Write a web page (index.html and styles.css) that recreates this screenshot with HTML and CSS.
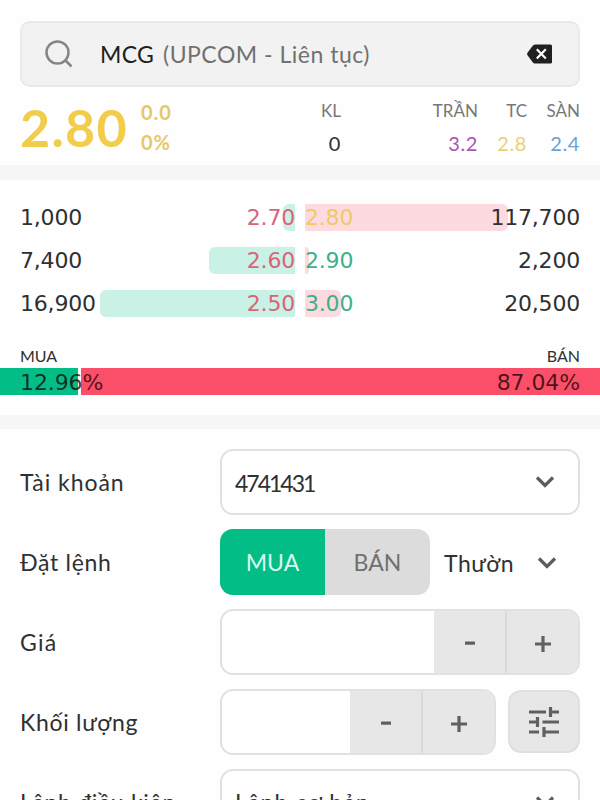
FILE: index.html
```
<!DOCTYPE html>
<html lang="vi">
<head>
  <meta charset="UTF-8">
  <meta name="viewport" content="width=device-width, initial-scale=1.0">
  <title>Đặt lệnh</title>
  <link rel="stylesheet" href="styles.css">
</head>
<body>
  <header class="search">
    <svg class="search-icon" width="28" height="28" viewBox="0 0 28 28">
      <circle cx="12.5" cy="12.5" r="11"/>
      <path d="M20.5 20.5L26.5 26.5"/>
    </svg>
    <span class="symbol">MCG</span>
    <span class="market">(UPCOM - Liên tục)</span>
    <svg class="clear" width="26" height="20" viewBox="0 0 26 20">
      <path d="M8 .5h15.500q1.500 0 1.500 1.500v16q0 1.500-1.500 1.500H8q-1.500 0-2.500-1.500L.5 11.300q-.8-1.300 0-2.600L5.500 2Q6.500.5 8 .5z" fill="#202020"/>
      <path d="M9.800 5.200l9 9.300M18.800 5.200l-9 9.300" stroke="#fff" stroke-width="2.200"/>
    </svg>
  </header>

  <section class="quote">
    <div class="last">2.80</div>
    <div class="change"><span>0.0</span><span>0%</span></div>
    <dl class="volume"><dt>KL</dt><dd>0</dd></dl>
    <dl class="ceil"><dt>TRẦN</dt><dd>3.2</dd></dl>
    <dl class="ref"><dt>TC</dt><dd>2.8</dd></dl>
    <dl class="floor"><dt>SÀN</dt><dd>2.4</dd></dl>
  </section>

  <section class="book">
    <div class="level">
      <div class="side buy"><i class="depth" style="width: 12px"></i><span>1,000</span><b>2.70</b></div>
      <div class="side sell"><i class="depth" style="width: 203px"></i><b class="flat">2.80</b><span>117,700</span></div>
    </div>
    <div class="level">
      <div class="side buy"><i class="depth" style="width: 86px"></i><span>7,400</span><b>2.60</b></div>
      <div class="side sell"><i class="depth" style="width: 4px"></i><b>2.90</b><span>2,200</span></div>
    </div>
    <div class="level">
      <div class="side buy"><i class="depth" style="width: 195px"></i><span>16,900</span><b>2.50</b></div>
      <div class="side sell"><i class="depth" style="width: 36px"></i><b>3.00</b><span>20,500</span></div>
    </div>
    <div class="ratio-labels"><span>MUA</span><span>BÁN</span></div>
    <div class="ratio">
      <i class="ratio-buy" style="width: 12.96%"></i><i class="ratio-sell"></i>
      <div class="ratio-text"><span>12.96%</span><span>87.04%</span></div>
    </div>
  </section>

  <form class="order">
    <div class="row">
      <label class="name-account">Tài khoản</label>
      <div class="select">
        <span class="account">4741431</span>
        <svg class="chevron" width="20" height="14" viewBox="0 0 20 14"><path d="M2 2.500l8 8 8-8"/></svg>
      </div>
    </div>
    <div class="row">
      <label class="name-order">Đặt lệnh</label>
      <div class="toggle"><span class="active">MUA</span><span>BÁN</span></div>
      <div class="kind">
        <span>Thườn</span>
        <svg class="chevron" width="20" height="14" viewBox="0 0 20 14"><path d="M2 2.500l8 8 8-8"/></svg>
      </div>
    </div>
    <div class="row">
      <label class="name-price">Giá</label>
      <div class="stepper">
        <span class="value"></span>
        <span class="step"><svg width="16" height="16" viewBox="0 0 16 16"><path d="M3 7.200h10"/></svg></span>
        <span class="step"><svg width="16" height="16" viewBox="0 0 16 16"><path d="M0 8h16M8 0v16"/></svg></span>
      </div>
    </div>
    <div class="row">
      <label class="name-volume">Khối lượng</label>
      <div class="stepper">
        <span class="value"></span>
        <span class="step"><svg width="16" height="16" viewBox="0 0 16 16"><path d="M3 7.200h10"/></svg></span>
        <span class="step"><svg width="16" height="16" viewBox="0 0 16 16"><path d="M0 8h16M8 0v16"/></svg></span>
      </div>
      <div class="tune">
        <svg width="30" height="30" viewBox="0 0 30 30">
          <path d="M0 5h17M21.500 0v10M21.500 5H30M0 15h8M8.500 10v10M13.500 15H30M0 25h10M15 20v10M15 25h15"/>
        </svg>
      </div>
    </div>
    <div class="row">
      <label class="name-condition">Lệnh điều kiện</label>
      <div class="select">
        <span class="basic">Lệnh cơ bản</span>
        <svg class="chevron" width="20" height="14" viewBox="0 0 20 14"><path d="M2 2.500l8 8 8-8"/></svg>
      </div>
    </div>
  </form>
</body>
</html>
```

FILE: styles.css
```
* {
  box-sizing: border-box;
}
body {
  margin: 0;
  height: 800px;
  overflow: hidden;
  background: #fefefe;
  color: #303030;
  font-family: Lato, "Noto Sans", sans-serif;
  font-size: 23px;
}
svg {
  display: block;
  flex: none;
}

/* search */
.search {
  display: flex;
  align-items: center;
  height: 66px;
  margin: 21px 20px 0;
  padding: 0 25px 0 23px;
  background: #f2f2f2;
  border: 2px solid #e9e9e9;
  border-radius: 10px;
}
.search-icon {
  margin-right: 27px;
  fill: none;
  stroke: #858585;
  stroke-width: 2.5;
}
.symbol {
  width: 63px;
  color: #202020;
  letter-spacing: 0.3px;
}
.market {
  color: #707070;
  letter-spacing: 0.5px;
  white-space: nowrap;
}
.clear {
  margin-left: auto;
}

/* quote */
.quote {
  display: flex;
  height: 78px;
  padding: 0 20px;
}
.last {
  width: 121px;
  color: #f2cc4b;
  font-size: 52px;
  font-weight: bold;
  letter-spacing: 1.3px;
  line-height: 81px;
}
.change {
  display: flex;
  flex-direction: column;
  width: 60px;
  padding-top: 10px;
  color: #e7c869;
  font-size: 20px;
  font-weight: bold;
  letter-spacing: 1px;
  line-height: 30px;
}
dl {
  margin: 0;
  padding-top: 13px;
  text-align: right;
}
dt {
  color: #777;
  font-size: 17px;
  line-height: 21px;
}
dd {
  margin: 9px 0 0;
  font-size: 20px;
  letter-spacing: 0.6px;
  line-height: 27px;
}
.volume {
  width: 140px;
}
.ceil {
  width: 137px;
}
.ref {
  width: 49px;
}
.floor {
  width: 53px;
}
.ceil dd {
  color: #aa52b8;
}
.ref dd {
  color: #ebcf76;
}
.floor dd {
  color: #6aa2d3;
}

/* order book */
.book {
  padding-top: 24px;
  border-top: 15px solid #f6f6f6;
  border-bottom: 14px solid #f6f6f6;
  height: 264px;
}
.level {
  display: flex;
  gap: 10px;
  height: 27px;
  margin-bottom: 16px;
  padding: 0 20px;
  font-family: "DejaVu Sans", sans-serif;
  font-size: 22px;
  letter-spacing: -0.2px;
  line-height: 28px;
}
.side {
  position: relative;
  display: flex;
  flex: 1;
  justify-content: space-between;
}
.side span,
.side b {
  position: relative;
  font-weight: normal;
}
.depth {
  position: absolute;
  top: 0;
  height: 27px;
}
.buy .depth {
  right: 0;
  background: #c9f1e5;
  border-radius: 6px 0 0 6px;
}
.sell .depth {
  left: 0;
  background: #fddae0;
  border-radius: 0 6px 6px 0;
}
.buy b {
  color: #d9647a;
}
.sell b {
  color: #3bb18a;
}
.sell .flat {
  color: #f1c967;
}
.ratio-labels {
  display: flex;
  justify-content: space-between;
  padding: 13px 20px 0;
  font-size: 16px;
  line-height: 20px;
}
.ratio {
  position: relative;
  display: flex;
  gap: 3px;
  height: 27px;
  margin-top: 2px;
}
.ratio-buy {
  background: #03bd87;
}
.ratio-sell {
  flex: 1;
  background: #fb4e69;
}
.ratio-text {
  position: absolute;
  inset: 0;
  display: flex;
  justify-content: space-between;
  padding: 0 20px;
  color: rgba(20, 0, 0, 0.75);
  font-family: "DejaVu Sans", sans-serif;
  font-size: 22px;
  letter-spacing: -0.1px;
  line-height: 29px;
}

/* order form */
.order {
  display: grid;
  gap: 14px;
  padding: 20px 20px 0;
}
.row {
  display: flex;
  height: 66px;
  line-height: 66px;
}
.row label {
  flex: none;
  width: 200px;
  letter-spacing: 0.7px;
  white-space: nowrap;
}
.row .name-account {
  letter-spacing: 0.95px;
}
.row .name-price {
  letter-spacing: 1.2px;
}
.select,
.stepper {
  display: flex;
  flex: 1;
  background: #fff;
  border: 2px solid #e1e1e1;
  border-radius: 13px;
  overflow: hidden;
}
.select {
  align-items: center;
  justify-content: space-between;
  padding: 0 23px 0 13px;
}
.account {
  padding-top: 2px;
  letter-spacing: -2px;
}
.basic {
  letter-spacing: 1.2px;
}
.chevron {
  fill: none;
  stroke: #5c5c5c;
  stroke-width: 3.2;
}
.toggle {
  display: flex;
  width: 210px;
  border-radius: 13px;
  overflow: hidden;
  background: #dcdcdc;
  color: #707070;
  text-align: center;
}
.toggle span {
  flex: 1;
}
.toggle .active {
  background: #03bd87;
  color: #d8faed;
}
.kind {
  display: flex;
  flex: 1;
  align-items: center;
  justify-content: space-between;
  padding: 1px 23px 0 14px;
  letter-spacing: 0.5px;
}
.value {
  flex: 1;
}
.step {
  display: flex;
  align-items: center;
  justify-content: center;
  width: 71px;
  padding-top: 4px;
  background: #e7e7e7;
}
.step + .step {
  width: 73px;
  border-left: 2px solid #dadada;
}
.step svg,
.tune svg {
  fill: none;
  stroke: #606060;
  stroke-width: 3.2;
}
.tune {
  display: flex;
  align-items: center;
  justify-content: center;
  width: 72px;
  height: 63px;
  margin: 1px 0 0 12px;
  background: #e7e7e7;
  border: 2px solid #dfdfdf;
  border-radius: 13px;
}
```
